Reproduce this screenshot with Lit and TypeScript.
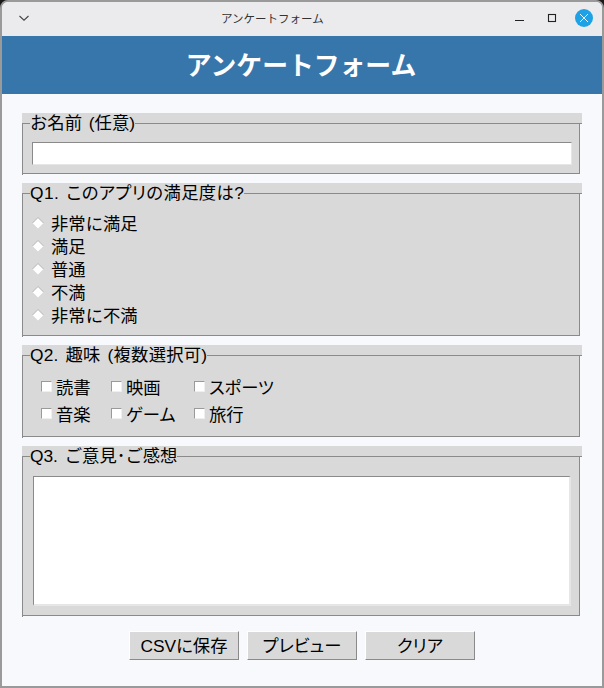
import { LitElement, html, css, svg } from "lit";
import { customElement } from "lit/decorators.js";

const FONT = css`"Liberation Sans", "Noto Sans CJK JP", sans-serif`;

@customElement("app-root")
export class AppRoot extends LitElement {
  static styles = css`
    :host {
      display: block;
      width: 604px;
      height: 688px;
      overflow: hidden;
      background: #1a1a1a;
      font-family: ${FONT};
      color: #000;
    }
    * { box-sizing: border-box; }
    .window {
      height: 688px;
      display: flex;
      flex-direction: column;
      border: 2px solid #9a9a9a;
      border-radius: 8px 8px 0 0;
      background: #f8f9fd;
      overflow: hidden;
    }
    .titlebar {
      flex: none;
      height: 34px;
      background: #ebebee;
      display: grid;
      grid-template-columns: 203px auto 1fr;
      align-items: center;
      padding: 0 9px 0 16px;
    }
    .titlebar .title {
      font-size: 11.5px;
      color: #333;
      margin-top: -2px;
    }
    .controls {
      display: flex;
      justify-content: flex-end;
      align-items: center;
    }
    .chev { display: block; }
    .header {
      flex: none;
      height: 58px;
      padding: 0 2px 4px 0;
      background: #3776ab;
      color: #fff;
      font-size: 25.8px;
      font-weight: 700;
      display: flex;
      align-items: center;
      justify-content: center;
    }
    .content {
      flex: 1;
      padding: 19px 20px 0;
      display: flex;
      flex-direction: column;
      gap: 8px;
    }
    .group { width: 560px; }
    .strip {
      height: 11px;
      background: #d9d9d9;
      border-bottom: 1px solid #8a8a8a;
    }
    .box {
      width: 558px;
      border-left: 1px solid #8a8a8a;
      padding-bottom: 1px;
    }
    .inner {
      display: flow-root;
      background: #d9d9d9;
      border-right: 1px solid #8a8a8a;
      border-bottom: 1px solid #8a8a8a;
    }
    .legend {
      width: fit-content;
      margin: -11px 0 0 7px;
      background: #d9d9d9;
      font-size: 17.33px;
      line-height: 20px;
      height: 20px;
      position: relative;
      word-spacing: 2px;
    }
    .legend.q1 { font-feature-settings: "palt"; letter-spacing: 0.4px; }
    .legend.q2 { letter-spacing: 0.2px; }
    .name-body { padding: 0 8px 8px 9px; }
    .field {
      display: block;
      border: 1px solid;
      border-color: #8a8a8a #e6e6e6 #e6e6e6 #8a8a8a;
      background: #fff;
      outline: none;
      padding: 0;
      margin: 0;
      border-radius: 0;
    }
    .field.name { width: 540px; height: 23px; margin-top: 9px; }
    .radios { padding: 8px 8px 9px 9px; }
    .radio {
      display: flex;
      align-items: center;
      gap: 7px;
      height: 23px;
      font-size: 17.33px;
    }
    .radio svg { flex: none; }
    .checks {
      padding: 8px 0 9px 18px;
      display: grid;
      grid-template-columns: 70px 83px auto;
      grid-auto-rows: 27px;
      align-items: center;
    }
    .check {
      display: flex;
      align-items: center;
      gap: 4px;
      font-size: 17.33px;
      font-feature-settings: "palt";
    }
    .cb {
      flex: none;
      width: 11px;
      height: 11px;
      background: #fff;
      border: 1px solid;
      border-color: #9a9a9a #efefef #efefef #9a9a9a;
    }
    .text-body { padding: 0 8px 9px 10px; }
    .field.text {
      width: 538px;
      height: 130px;
      margin-top: 10px;
      resize: none;
      border-width: 1px 2px 2px 1px;
    }
    .buttons {
      display: flex;
      justify-content: center;
      gap: 8px;
      margin-top: 6px;
    }
    .btn {
      width: 110px;
      height: 29px;
      padding: 0 0 2px;
      margin: 0;
      font: 17.33px ${FONT};
      font-feature-settings: "palt";
      color: #000;
      background: #d9d9d9;
      border: 1px solid;
      border-color: #fff #8a8a8a #8a8a8a #fff;
      border-radius: 0;
    }
  `;

  private diamond() {
    return html`<svg width="12" height="12" viewBox="0 0 12 12" aria-hidden="true">
      ${svg`<path d="M6 .5 11.5 6 6 11.5 .5 6Z" fill="#fff"/>
      <path d="M.5 6 6 .5 11.5 6" fill="none" stroke="#b4b4b4" stroke-width="1"/>`}
    </svg>`;
  }

  render() {
    const radios = ["非常に満足", "満足", "普通", "不満", "非常に不満"];
    const checks = ["読書", "映画", "スポーツ", "音楽", "ゲーム", "旅行"];
    return html`
      <div class="window">
        <div class="titlebar">
          <svg class="chev" width="12" height="12" viewBox="0 0 12 12">
            <path d="M1.5 3 6 7.2 10.5 3" fill="none" stroke="#444" stroke-width="1.1"/>
          </svg>
          <div class="title">アンケートフォーム</div>
          <div class="controls">
            <svg width="82" height="22" viewBox="0 0 82 22">
              <path d="M4 12.5H13" stroke="#222" stroke-width="1.2"/>
              <rect x="37.5" y="6.5" width="7" height="7" fill="none" stroke="#222" stroke-width="1.1"/>
              <circle cx="73" cy="10" r="9" fill="#1fa1e5"/>
              <path d="M69 6 77 14M77 6 69 14" stroke="#fff" stroke-width="0.9"/>
            </svg>
          </div>
        </div>
        <div class="header">アンケートフォーム</div>
        <div class="content">
          <section class="group">
            <div class="strip"></div>
            <div class="box"><div class="inner">
              <div class="legend">お名前 (任意)</div>
              <div class="name-body"><input class="field name" type="text" /></div>
            </div></div>
          </section>
          <section class="group">
            <div class="strip"></div>
            <div class="box"><div class="inner">
              <div class="legend q1">Q1. このアプリの満足度は?</div>
              <div class="radios">
                ${radios.map((r) => html`<label class="radio">${this.diamond()}<span>${r}</span></label>`)}
              </div>
            </div></div>
          </section>
          <section class="group">
            <div class="strip"></div>
            <div class="box"><div class="inner">
              <div class="legend q2">Q2. 趣味 (複数選択可)</div>
              <div class="checks">
                ${checks.map((c) => html`<label class="check"><span class="cb"></span><span>${c}</span></label>`)}
              </div>
            </div></div>
          </section>
          <section class="group">
            <div class="strip"></div>
            <div class="box"><div class="inner">
              <div class="legend">Q3. ご意見･ご感想</div>
              <div class="text-body"><textarea class="field text"></textarea></div>
            </div></div>
          </section>
          <div class="buttons">
            <button class="btn">CSVに保存</button>
            <button class="btn">プレビュー</button>
            <button class="btn">クリア</button>
          </div>
        </div>
      </div>
    `;
  }
}
